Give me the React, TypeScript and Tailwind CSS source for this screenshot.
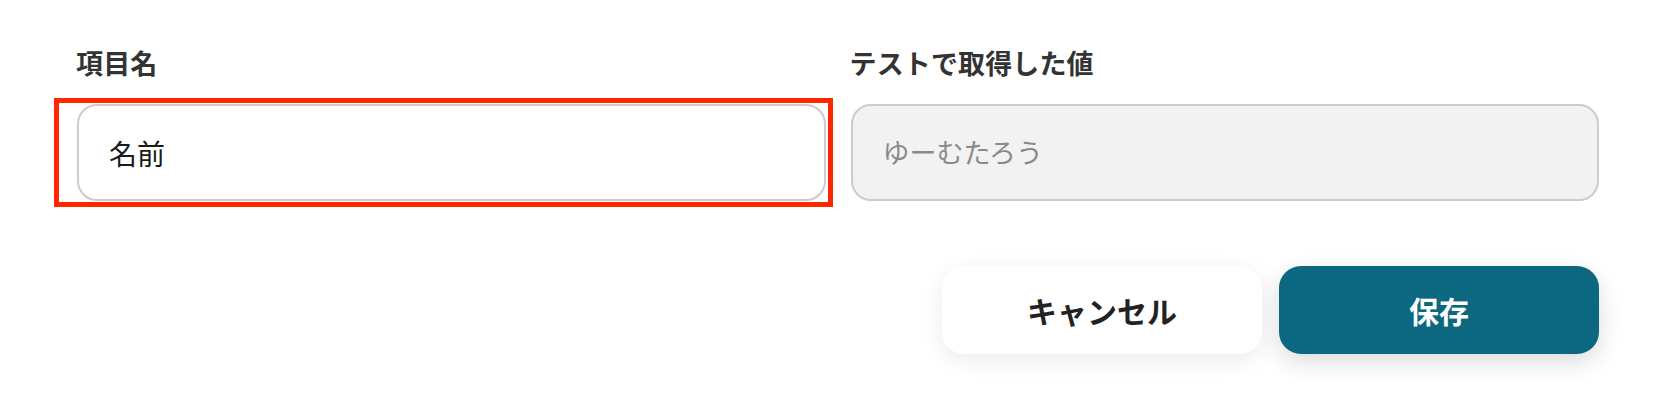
const font = { fontFamily: '"Noto Sans CJK JP", "Noto Sans", sans-serif' }

// field label + box
function Field({ label, children, highlight }: { label: string, children: React.ReactNode, highlight?: boolean }) {
  return (
    <div className="flex flex-col">
      <div className="text-[27px] leading-[39px] font-bold tracking-[0.005em] text-[#333333] mb-[22px] -ml-[1px]">{label}</div>
      <div className="relative">
        {highlight && (
          <div className="absolute -left-[23px] -top-[6px] -right-[7px] -bottom-[6px] border-[5px] border-[#ff2600] pointer-events-none" />
        )}
        {children}
      </div>
    </div>
  )
}

export default function App() {
  return (
    <div style={font} className="w-[1680px] h-[414px] bg-white overflow-hidden">
      <div className="pt-[43px] pl-[77px] pr-[81px]">
        <div className="grid grid-cols-2 gap-[25px]">
          <Field label="項目名" highlight>
            <div className="h-[97px] border-2 border-[#cccccc] rounded-[20px] bg-white flex items-center pl-[30px] text-[28px] text-[#1a1a1a]">
              名前
            </div>
          </Field>
          <Field label="テストで取得した値">
            <div className="h-[97px] border-2 border-[#cccccc] rounded-[20px] bg-[#f2f2f2] flex items-center pl-[30px] text-[27px] text-[#8a8a8a]">
              ゆーむたろう
            </div>
          </Field>
        </div>

        <div className="flex justify-end gap-[17px] mt-[65px]">
          <button className="w-[320px] h-[88px] rounded-[22px] bg-white text-[30px] font-bold text-[#222222] shadow-[0_6px_24px_rgba(0,0,0,0.08)]">
            キャンセル
          </button>
          <button className="w-[320px] h-[88px] rounded-[22px] bg-[#0c6880] text-[30px] font-bold text-white shadow-[0_8px_24px_rgba(0,0,0,0.14)]">
            保存
          </button>
        </div>
      </div>
    </div>
  )
}
